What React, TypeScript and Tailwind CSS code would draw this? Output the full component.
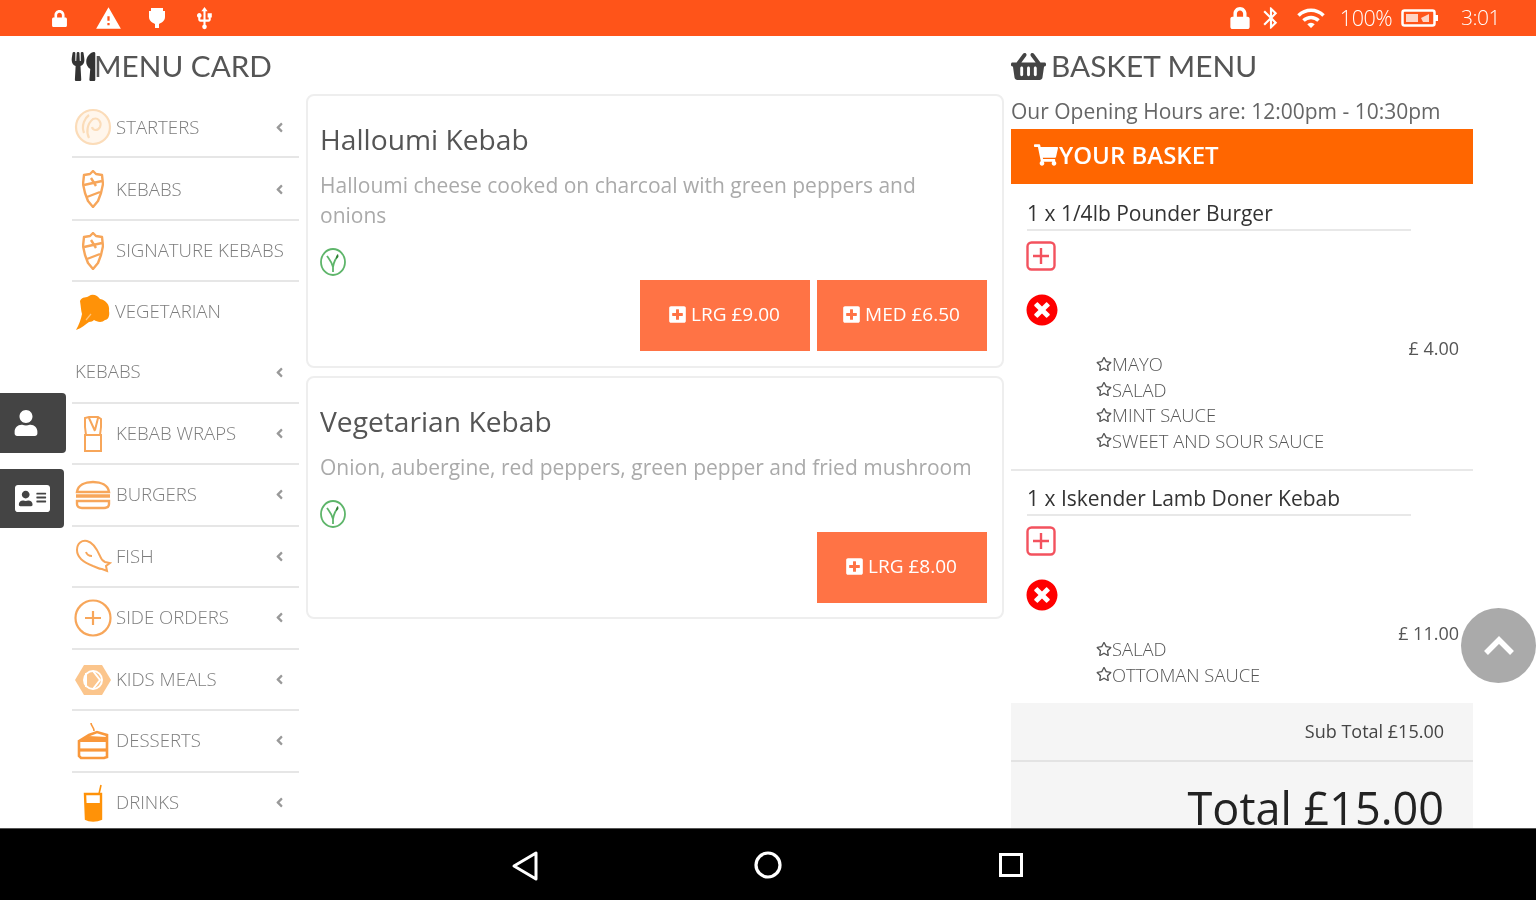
import React from "react";
import { FaAngleLeft, FaAddressCard, FaLock, FaPlusSquare, FaRegStar, FaShoppingBasket, FaShoppingCart, FaTimesCircle, FaUser, FaUtensils } from "react-icons/fa";
import { MdBluetooth, MdUsb, MdWarning, MdWifi } from "react-icons/md";

const O = "#f7a65a";
const Kebab = () => (
  <svg width="22" height="38" viewBox="0 0 22 38" fill="none" stroke={O} strokeWidth="2.4" strokeLinejoin="round">
    <path d="M11 1l3 3 6 1 1 9-2 9-3 8-5 6-5-6-3-8-2-9 1-9 6-1z" />
    <path d="M2 15l18-4M5 27l13-5M9 8l5 8" />
  </svg>
);
const Starter = () => (
  <svg width="38" height="38" viewBox="0 0 38 38" fill="none" stroke="#fbdcb9" strokeWidth="2.2">
    <circle cx="19" cy="19" r="17" fill="#fff6ec" />
    <path d="M10 25c-3-8 1-15 5-18M15 30c-3-6-2-14 4-19 5-2 9 3 7 8-2 4-7 4-8 0" />
  </svg>
);
const Wrap = () => (
  <svg width="20" height="38" viewBox="0 0 20 38" fill="none" stroke={O} strokeWidth="2">
    <path d="M2 12V3l4-1h9l3 2v8l-1 8H3zM2 20h16v16H2zM6 3l6 13M15 3l-3 12" />
  </svg>
);
const Broccoli = () => (
  <svg width="38" height="38" viewBox="0 0 38 38">
    <path fill="#ff9208" d="M5 8c2-5 7-3 9-5 4-3 9 0 11 3 6 1 10 6 9 12 1 5-1 9-4 9-3 3-8 2-11 0-1 1-3 2-5 2-3 2-7 6-13 8 3-5 5-11 6-16-1-3-1-7-2-13z" />
    <path d="M11 27l5-6" stroke="#ffc27a" strokeWidth="1.2" />
  </svg>
);
const Burger = () => (
  <svg width="38" height="30" viewBox="0 0 38 30" fill="none" stroke={O} strokeWidth="2.4">
    <path d="M3 12C4 5 11 2 19 2s15 3 16 10z" />
    <path d="M2 16h34" strokeWidth="3.6" />
    <path d="M3 21h32v3c0 3-2 4-5 4H8c-3 0-5-1-5-4z" />
  </svg>
);
const Fish = () => (
  <svg width="38" height="38" viewBox="0 0 38 38" fill="none" stroke={O} strokeWidth="2">
    <path d="M3 12C3 5 8 2 13 3c5 1 9 6 13 15 1 3 3 5 5 6l5 1-4 3 1 5-5-2c-3 0-6-2-9-3-8-3-16-8-16-16z" />
    <path d="M12 14c1 3 3 4 6 4" />
  </svg>
);
const PlusCircle = () => (
  <svg width="38" height="38" viewBox="0 0 38 38" fill="none" stroke={O} strokeWidth="2.2">
    <circle cx="19" cy="19" r="17.5" />
    <path d="M11 19h16M19 12v14" />
  </svg>
);
const Kids = () => (
  <svg width="38" height="32" viewBox="0 0 38 32">
    <path fill="#fbc58c" d="M1 16L10 1h18l9 15-9 15H10z" />
    <circle cx="19" cy="16" r="9" fill="none" stroke="#fff" strokeWidth="2" />
    <path d="M12 9v14M19 7l7 9-7 9" fill="none" stroke="#fff" strokeWidth="2" />
  </svg>
);
const Cake = () => (
  <svg width="32" height="38" viewBox="0 0 32 38" fill="none" stroke="#f9983c" strokeWidth="2.6">
    <path d="M14 1c0 3 3 4 3 8" strokeWidth="1.6" />
    <path d="M2 19l10-6 8-3 10 3v22l-3 1H4l-2-2z" />
    <path d="M11 14l19 1v5H2z" fill="#f9983c" stroke="none" />
    <path d="M2 28h28" strokeWidth="3.2" />
  </svg>
);
const Drink = () => (
  <svg width="22" height="38" viewBox="0 0 22 38" fill="none">
    <path d="M3 10h16v25c-4 2-12 2-15 0z" fill="#fff" stroke="#ff9208" strokeWidth="2.4" />
    <path d="M3 19h16v16c-4 2-12 2-15 0z" fill="#ff9208" />
    <path d="M17 10l2-9" stroke="#ff9208" strokeWidth="1.6" />
  </svg>
);
const Veg = () => (
  <svg width="28" height="28" viewBox="0 0 28 28" fill="none" stroke="#5eb56a" strokeWidth="1.8">
    <ellipse cx="14" cy="14" rx="12" ry="13" />
    <path d="M8 8c2 3 5 6 6 11M19 8c-2 2-4 5-5 11v5" />
    <path d="M19 6c1 2 0 4-2 5 0-2 0-4 2-5z" fill="#2e7d32" stroke="none" />
  </svg>
);
const PlusBox = () => (
  <svg width="30" height="30" viewBox="0 0 30 30" fill="none" stroke="#f3525e" strokeWidth="2.4">
    <rect x="1.5" y="1.5" width="27" height="27" rx="4" />
    <path d="M7 15h16M15 7v16" />
  </svg>
);

const rows: [string, React.ReactNode, string, boolean, string][] = [
  ["STARTERS", <Starter />, "h-[61px]", true, ""],
  ["KEBABS", <Kebab />, "h-[63px]", true, ""],
  ["SIGNATURE KEBABS", <Kebab />, "h-[61px]", false, "-mt-[2px]"],
];
const rows2: [string, React.ReactNode, string, boolean, string][] = [
  ["KEBAB WRAPS", <Wrap />, "h-[61px]", true, "-mt-[2px]"],
  ["BURGERS", <Burger />, "h-[62px]", true, "-mt-[2px]"],
  ["FISH", <Fish />, "h-[61px]", true, "-mt-[2px]"],
  ["SIDE ORDERS", <PlusCircle />, "h-[62px]", true, "-mt-[2px]"],
  ["KIDS MEALS", <Kids />, "h-[61px]", true, "-mt-[2px]"],
  ["DESSERTS", <Cake />, "h-[62px]", true, "-mt-[2px]"],
  ["DRINKS", <Drink />, "h-[62px]", true, "-mt-[2px]"],
];

function Chevron() {
  return <FaAngleLeft className="mt-[2px] shrink-0 text-[15px] text-[#999]" />;
}

function MenuRow({ label, icon, h, chevron, t }: { label: string; icon: React.ReactNode; h: string; chevron: boolean; t: string }) {
  return (
    <div className={`flex items-center border-b-2 border-[#e6e6e6] pr-[12px] ${h}`}>
      <div className="flex w-[44px] shrink-0 justify-start">
        <div className="flex w-[42px] justify-center">{icon}</div>
      </div>
      <div className={`flex flex-1 items-center ${t}`}>
        <span className="flex-1 whitespace-nowrap text-[18.6px] font-light text-[#7d7d7d]">{label}</span>
        {chevron && <Chevron />}
      </div>
    </div>
  );
}

function Card({ title, desc, prices, h }: { title: string; desc: string; prices: string[]; h: string }) {
  return (
    <div className={`rounded-lg border-2 border-[#eeeeee] pl-[12px] pr-[15px] pt-[25px] ${h}`}>
      <h3 className="text-[28.2px] leading-[36px] text-[#555]">{title}</h3>
      <p className="mt-[13px] max-w-[660px] text-[21px] leading-[30px] text-[#aaa]">{desc}</p>
      <div className="-ml-[1px] mt-[18px]"><Veg /></div>
      <div className="flex justify-end gap-[7px] pt-[4px]">
        {prices.map((p) => (
          <div key={p} className="flex h-[71px] w-[170px] items-center justify-center gap-[4px] bg-[#ff7345] pb-[3px] pr-[2px] text-[19px] text-white">
            <FaPlusSquare className="text-[19px]" />
            <span>{p}</span>
          </div>
        ))}
      </div>
    </div>
  );
}

function BasketItem({ title, price, extras, pt }: { title: string; price: string; extras: string[]; pt: string }) {
  return (
    <div className={pt}>
      <div className="mx-[16px] w-[384px] border-b-2 border-[#e8e8e8] text-[21px] leading-[31px] text-[#333]">{title}</div>
      <div className="ml-[15px] mt-[10px] h-[30px]">
        <PlusBox />
      </div>
      <div className="ml-[15px] mt-[23px] h-[32px]">
        <FaTimesCircle className="text-[32px] text-[#f00]" />
      </div>
      <div className="mt-[10px] -mb-[9px] pr-[14px] text-right text-[18px] leading-[24px] text-[#555]">{price}</div>
      <div className="pl-[85px] text-[18.4px] leading-[25.5px] font-light text-[#555]">
        {extras.map((e) => (
          <div key={e} className="flex items-center">
            <FaRegStar className="shrink-0 text-[16px]" />
            <span>{e}</span>
          </div>
        ))}
      </div>
    </div>
  );
}

export default function App() {
  return (
    <div className="relative flex h-[900px] w-[1536px] flex-col overflow-hidden bg-white font-['Open_Sans',sans-serif] blur-[0.7px]">
      <div className="flex h-[36px] shrink-0 items-center justify-between bg-[#ff5419] pl-[51px] pr-[36px] text-white">
        <div className="flex items-center">
          <FaLock className="text-[17px]" />
          <MdWarning className="ml-[27px] text-[27px]" />
          <svg className="ml-[25px]" width="20" height="24" viewBox="0 0 20 24" fill="#fff"><path d="M4 2h12v3h2v6c0 4-4 6-6 7v4H8v-4c-2-1-6-3-6-7V5h2z" /></svg>
          <MdUsb className="ml-[25px] text-[25px]" />
        </div>
        <div className="flex items-center">
          <FaLock className="text-[22px]" />
          <MdBluetooth className="ml-[7px] text-[26px]" />
          <MdWifi className="ml-[12px] text-[30px]" />
          <span className="ml-[14px] text-[21.5px] font-light tracking-[-0.5px]">100%</span>
          <svg className="ml-[9px]" width="38" height="18" viewBox="0 0 38 18" fill="none"><rect x="1.5" y="1.5" width="32" height="15" rx="2" stroke="#fff" strokeWidth="2.5" /><rect x="34" y="6" width="3" height="6" fill="#fff" /><path d="M5 5h12v8H5zM20 9l8-4v8h-6z" fill="#fff" opacity="0.75" /></svg>
          <span className="ml-[22px] text-[21px] font-light tracking-[-0.5px]">3:01</span>
        </div>
      </div>

      <div className="flex h-[792px] shrink-0 overflow-hidden">
        <div className="ml-[72px] w-[227px] shrink-0">
          <div className="flex h-[61px] items-center pb-[1px] font-['Lato',sans-serif] text-[29.7px] text-[#555]">
            <FaUtensils className="-ml-[3px] -mr-[4px] shrink-0 text-[29px] text-[#333]" />
            <span>MENU CARD</span>
          </div>
          {rows.map(([l, i, h, c, t]) => <MenuRow key={l} label={l} icon={i} h={h} chevron={c} t={t} />)}
          <div className="border-b-2 border-[#e6e6e6] pr-[12px]">
            <div className="flex h-[60px] items-center">
              <div className="flex w-[43px] shrink-0 justify-center"><Broccoli /></div>
              <span className="-mt-[2px] text-[18.6px] font-light text-[#7d7d7d]">VEGETARIAN</span>
            </div>
            <div className="flex h-[60px] items-center pl-[3px]">
              <span className="-mt-[2px] flex-1 text-[18.6px] font-light text-[#7d7d7d]">KEBABS</span>
              <FaAngleLeft className="shrink-0 text-[15px] text-[#999]" />
            </div>
          </div>
          {rows2.map(([l, i, h, c, t]) => <MenuRow key={l} label={l} icon={i} h={h} chevron={c} t={t} />)}
        </div>

        <div className="ml-[7px] mt-[58px] flex w-[698px] shrink-0 flex-col gap-[8px]">
          <Card title="Halloumi Kebab" desc="Halloumi cheese cooked on charcoal with green peppers and onions" prices={["LRG £9.00", "MED £6.50"]} h="h-[274px]" />
          <Card title="Vegetarian Kebab" desc="Onion, aubergine, red peppers, green pepper and fried mushroom" prices={["LRG £8.00"]} h="h-[243px]" />
        </div>

        <div className="ml-[7px] w-[462px] shrink-0">
          <div className="flex h-[60px] items-center gap-[5px] font-['Lato',sans-serif] text-[29.8px] text-[#555]">
            <FaShoppingBasket className="text-[35px] text-[#444]" />
            <span>BASKET MENU</span>
          </div>
          <div className="h-[33px] text-[21px] leading-[31px] text-[#666]">Our Opening Hours are: 12:00pm - 10:30pm</div>
          <div className="flex h-[55px] items-center gap-[1px] bg-[#ff6600] pb-[3px] pl-[23px] text-[24px] font-semibold text-white">
            <FaShoppingCart className="text-[24px]" />
            <span>YOUR BASKET</span>
          </div>
          <BasketItem pt="pt-[14px]" title="1 x 1/4lb Pounder Burger" price="£ 4.00" extras={["MAYO", "SALAD", "MINT SAUCE", "SWEET AND SOUR SAUCE"]} />
          <div className="mt-[16px] border-t-2 border-[#e8e8e8]" />
          <BasketItem pt="pt-[12px]" title="1 x Iskender Lamb Doner Kebab" price="£ 11.00" extras={["SALAD", "OTTOMAN SAUCE"]} />
          <div className="mt-[16px] h-[125px] bg-[#f5f5f5] pr-[29px] text-right">
            <div className="-mr-[29px] flex h-[59px] items-center justify-end border-b-2 border-[#e3e3e3] pr-[29px] text-[18px] text-[#444]">Sub Total £15.00</div>
            <div className="pt-[27px] text-[45px] leading-[38px] text-[#222]">Total £15.00</div>
          </div>
        </div>
      </div>

      <div className="flex h-[72px] shrink-0 items-center justify-center gap-[203px] border-t border-[#555] bg-black">
        <svg width="40" height="40" viewBox="0 0 40 40" fill="none" stroke="#fff" strokeWidth="3" strokeLinejoin="round"><path d="M31 8v26L9 21z" /></svg>
        <svg width="40" height="40" viewBox="0 0 40 40" fill="none" stroke="#fff" strokeWidth="3.2"><circle cx="20" cy="20" r="12" /></svg>
        <svg width="40" height="40" viewBox="0 0 40 40" fill="none" stroke="#fff" strokeWidth="3"><rect x="9.5" y="9.5" width="21" height="21" /></svg>
      </div>

      <div className="absolute left-0 top-[393px] flex h-[60px] w-[66px] items-center justify-center rounded-r bg-[#444] pr-[14px] text-white"><FaUser className="text-[26px]" /></div>
      <div className="absolute left-0 top-[469px] flex h-[59px] w-[64px] items-center justify-center rounded-r bg-[#444] text-white"><FaAddressCard className="text-[35px]" /></div>
      <div className="absolute left-[1461px] top-[608px] flex h-[75px] w-[75px] items-center justify-center rounded-full bg-[#aaaaaa]">
        <svg width="32" height="22" viewBox="0 0 32 22" fill="none" stroke="#fff" strokeWidth="5.5"><path d="M3 18L16 5l13 13" /></svg>
      </div>
    </div>
  );
}
